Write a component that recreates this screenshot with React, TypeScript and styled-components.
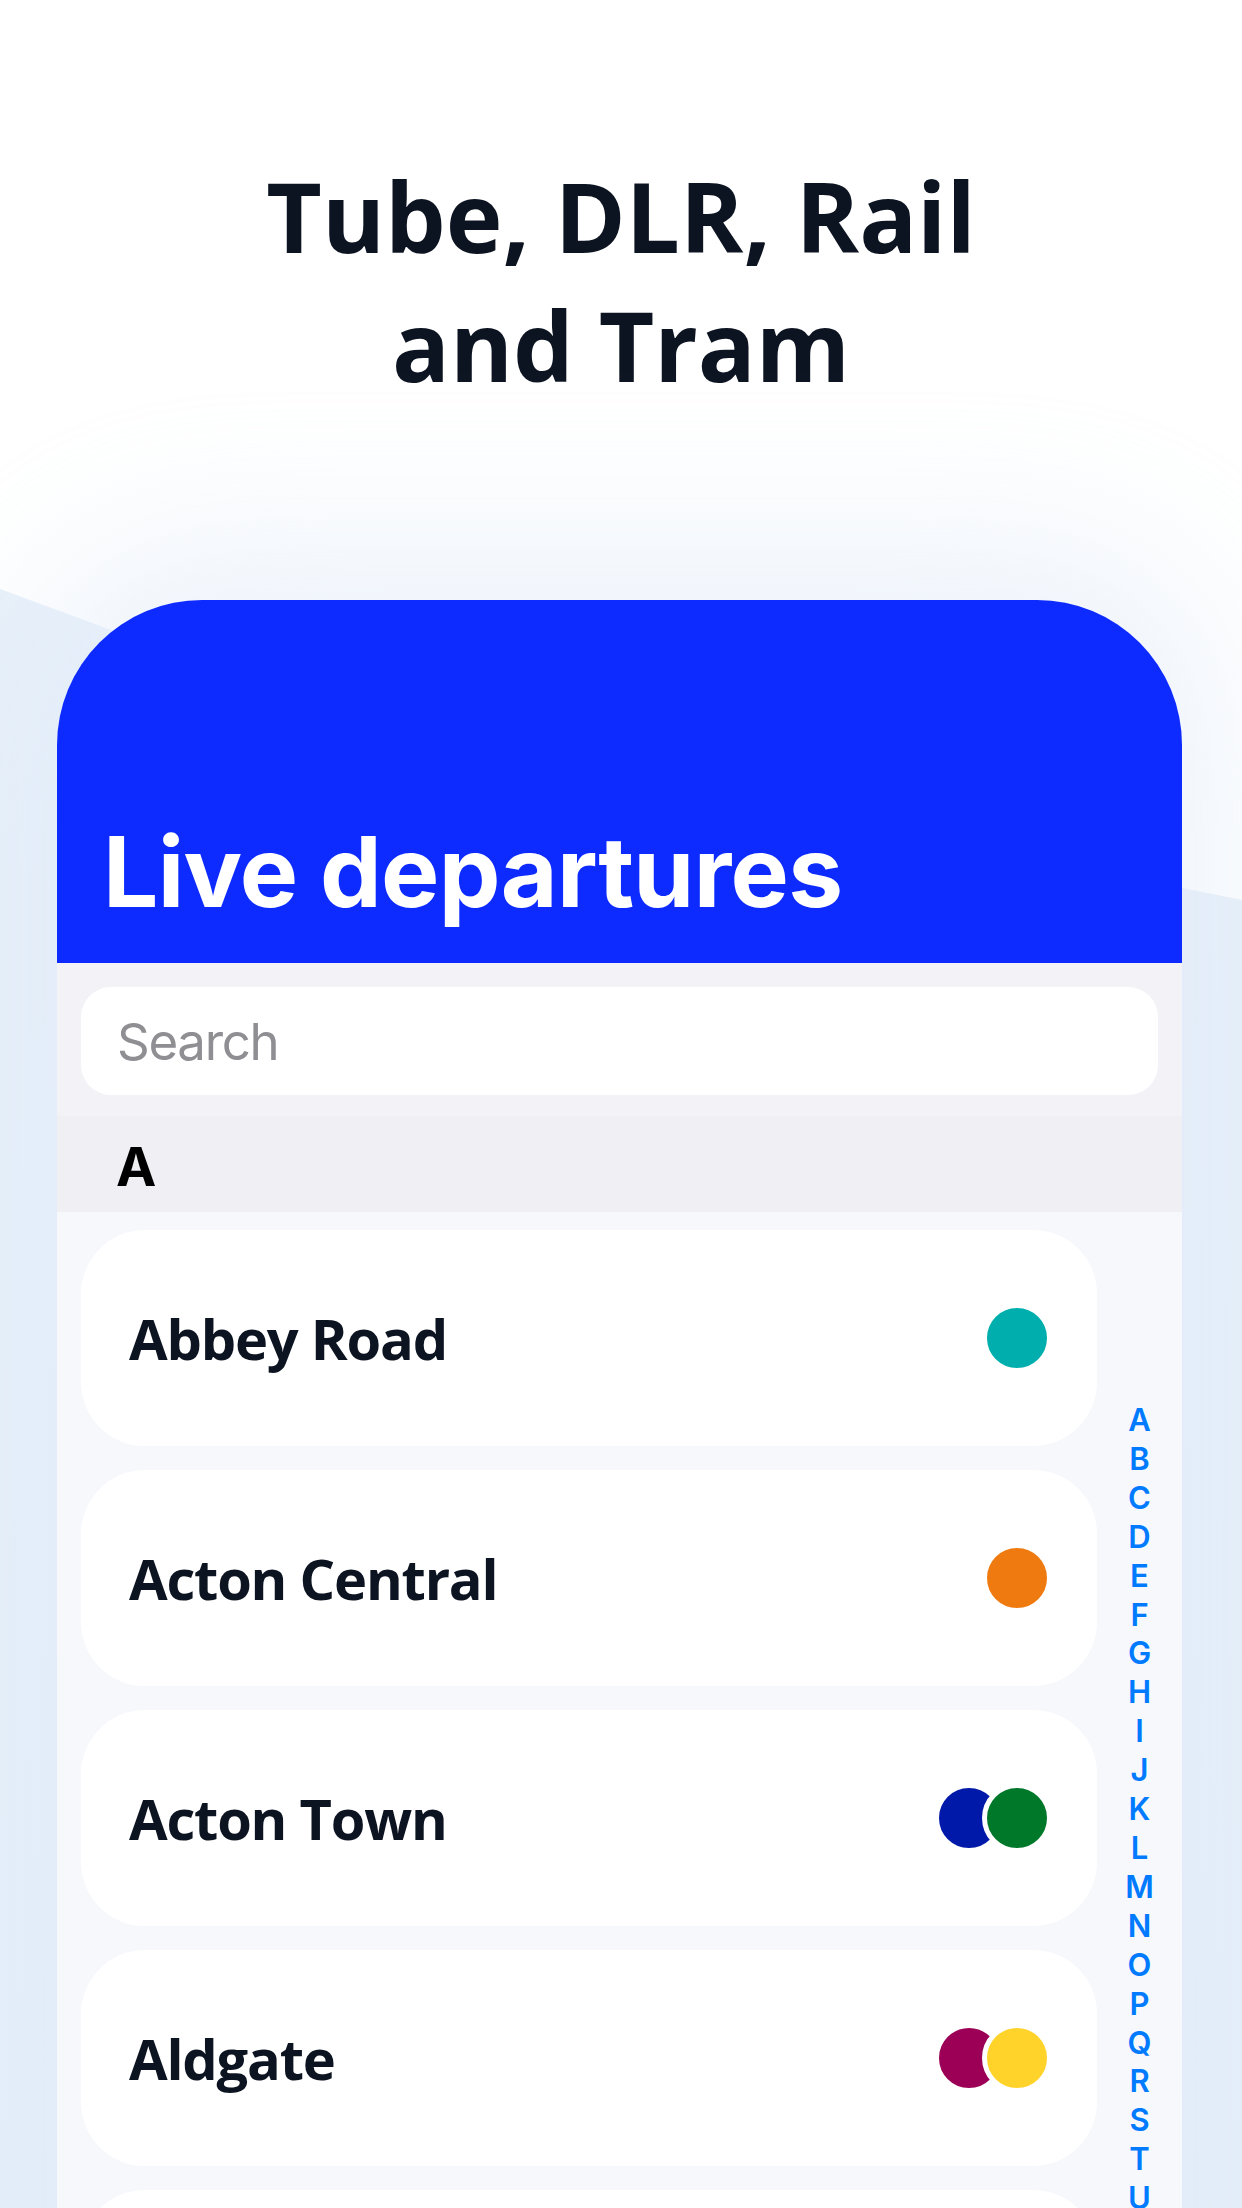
import * as React from "react";
import styled, { createGlobalStyle } from "styled-components";

const GlobalStyle = createGlobalStyle`
  html, body {
    margin: 0;
    padding: 0;
    background: #fff;
  }
  body {
    width: 1242px;
    height: 2208px;
    overflow: hidden;
  }
  * {
    box-sizing: border-box;
  }
`;

interface IStation {
  name: string;
  lines: string[];
}

const stations: IStation[] = [
  { name: "Abbey Road", lines: ["#00AFAD"] },
  { name: "Acton Central", lines: ["#EF7B10"] },
  { name: "Acton Town", lines: ["#0019A8", "#00782A"] },
  { name: "Aldgate", lines: ["#9B0056", "#FFD32A"] },
  { name: "Aldgate East", lines: ["#F3A9BB", "#00782A"] }
];

const letters = "ABCDEFGHIJKLMNOPQRSTUVWXYZ".split("");

export default function App() {
  return (
    <Page>
      <GlobalStyle />
      <Backdrop />
      <Headline>
        Tube, DLR, Rail
        <br />
        and Tram
      </Headline>
      <Phone>
        <NavBar>
          <LargeTitle>Live departures</LargeTitle>
        </NavBar>
        <SearchArea>
          <SearchField>Search</SearchField>
        </SearchArea>
        <SectionHeader>A</SectionHeader>
        <ListArea>
          <Cards>
            {stations.map(station => (
              <Card key={station.name}>
                <StationName>{station.name}</StationName>
                <Dots>
                  {station.lines.map((color, i) => (
                    <Dot key={i} $color={color} />
                  ))}
                </Dots>
              </Card>
            ))}
          </Cards>
          <Index>
            {letters.map(letter => (
              <IndexLetter key={letter}>{letter}</IndexLetter>
            ))}
          </Index>
        </ListArea>
      </Phone>
    </Page>
  );
}

const Page = styled.div`
  position: relative;
  width: 1242px;
  height: 2208px;
  overflow: hidden;
  background: #fff;
`;

const Backdrop = styled.div`
  position: absolute;
  inset: 0;
  background: linear-gradient(180deg, #ecf3fb 0%, #e6eff9 40%, #e4eef9 100%);
  clip-path: polygon(0 589px, 368px 725px, 1242px 900px, 1242px 2208px, 0 2208px);
`;

const Headline = styled.h1`
  position: relative;
  margin: 0;
  padding-top: 151px;
  font-family: "Open Sans", "Liberation Sans", sans-serif;
  font-weight: 700;
  font-size: 96px;
  line-height: 129px;
  color: #0d1421;
  text-align: center;
`;

const Phone = styled.div`
  position: relative;
  margin: 191px 0 0 57px;
  width: 1125px;
  border-radius: 145px 145px 0 0;
  overflow: hidden;
  background: #f7f8fc;
  box-shadow: 0 -20px 160px 40px rgba(225, 235, 248, 0.6);
`;

const NavBar = styled.header`
  height: 363px;
  background: #0d2bff;
  display: flex;
  align-items: flex-end;
  padding: 0 0 42px 46px;
`;

const LargeTitle = styled.h2`
  margin: 0;
  font-family: Inter, "Liberation Sans", sans-serif;
  font-weight: 700;
  font-size: 98px;
  line-height: 98px;
  letter-spacing: -0.7px;
  color: #fff;
`;

const SearchArea = styled.div`
  background: #f2f2f7;
  padding: 24px 24px 21px;
`;

const SearchField = styled.div`
  height: 108px;
  border-radius: 30px;
  background: #fff;
  display: flex;
  align-items: center;
  padding-left: 36px;
  font-family: Inter, "Liberation Sans", sans-serif;
  font-size: 51px;
  letter-spacing: -1.3px;
  color: #8e8e93;
`;

const SectionHeader = styled.div`
  height: 96px;
  background: #efeff4;
  display: flex;
  align-items: center;
  padding: 6px 0 0 59px;
  font-family: Inter, "Liberation Sans", sans-serif;
  font-weight: 700;
  font-size: 54px;
  line-height: 54px;
  color: #000;
`;

const ListArea = styled.div`
  display: grid;
  grid-template-columns: 1fr 85px;
  padding-left: 24px;
  height: 1400px;
`;

const Cards = styled.div`
  display: flex;
  flex-direction: column;
  gap: 24px;
  padding-top: 18px;
`;

const Card = styled.div`
  height: 216px;
  border-radius: 64px;
  background: #fff;
  display: flex;
  align-items: center;
  justify-content: space-between;
  padding: 0 45px 0 48px;
`;

const StationName = styled.span`
  font-family: "Open Sans", "Liberation Sans", sans-serif;
  font-weight: 700;
  font-size: 56px;
  line-height: 56px;
  letter-spacing: -1.2px;
  color: #0d1421;
`;

const Dots = styled.div`
  display: flex;
  align-items: center;
`;

const Dot = styled.span<{ $color: string }>`
  width: 70px;
  height: 70px;
  border-radius: 50%;
  border: 5px solid #fff;
  background: ${p => p.$color};

  & + & {
    margin-left: -22px;
  }
`;

const Index = styled.div`
  display: flex;
  flex-direction: column;
  align-items: center;
  padding-top: 189px;
`;

const IndexLetter = styled.span`
  font-family: Inter, "Liberation Sans", sans-serif;
  font-weight: 600;
  font-size: 31px;
  line-height: 38.9px;
  color: #007aff;
`;
